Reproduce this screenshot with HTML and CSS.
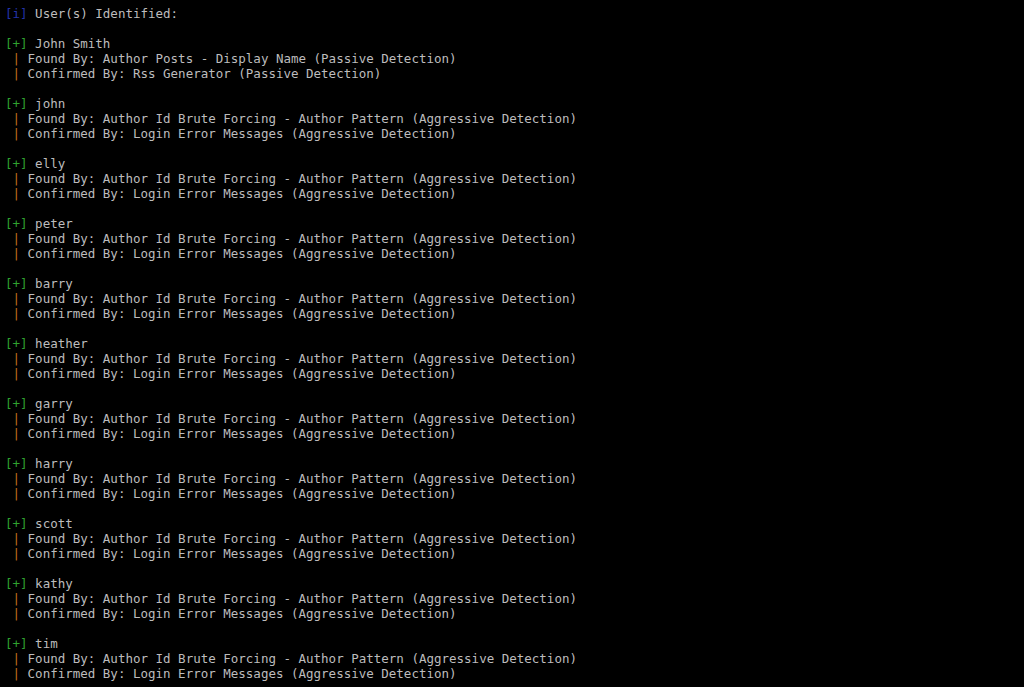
FILE: index.html
```html
<!DOCTYPE html>
<html lang="en">
<head>
    <meta charset="UTF-8">
    <title>wpscan - users</title>
    <link rel="stylesheet" href="styles.css">
</head>
<body>
    <div class="terminal">
        <div class="line"><span class="info">[i]</span> User(s) Identified:</div>
        <div class="line"> </div>

        <div class="line"><span class="ok">[+]</span> John Smith</div>
        <div class="line"> <span class="bar">|</span> Found By: Author Posts - Display Name (Passive Detection)</div>
        <div class="line"> <span class="bar">|</span> Confirmed By: Rss Generator (Passive Detection)</div>
        <div class="line"> </div>

        <div class="line"><span class="ok">[+]</span> john</div>
        <div class="line"> <span class="bar">|</span> Found By: Author Id Brute Forcing - Author Pattern (Aggressive Detection)</div>
        <div class="line"> <span class="bar">|</span> Confirmed By: Login Error Messages (Aggressive Detection)</div>
        <div class="line"> </div>

        <div class="line"><span class="ok">[+]</span> elly</div>
        <div class="line"> <span class="bar">|</span> Found By: Author Id Brute Forcing - Author Pattern (Aggressive Detection)</div>
        <div class="line"> <span class="bar">|</span> Confirmed By: Login Error Messages (Aggressive Detection)</div>
        <div class="line"> </div>

        <div class="line"><span class="ok">[+]</span> peter</div>
        <div class="line"> <span class="bar">|</span> Found By: Author Id Brute Forcing - Author Pattern (Aggressive Detection)</div>
        <div class="line"> <span class="bar">|</span> Confirmed By: Login Error Messages (Aggressive Detection)</div>
        <div class="line"> </div>

        <div class="line"><span class="ok">[+]</span> barry</div>
        <div class="line"> <span class="bar">|</span> Found By: Author Id Brute Forcing - Author Pattern (Aggressive Detection)</div>
        <div class="line"> <span class="bar">|</span> Confirmed By: Login Error Messages (Aggressive Detection)</div>
        <div class="line"> </div>

        <div class="line"><span class="ok">[+]</span> heather</div>
        <div class="line"> <span class="bar">|</span> Found By: Author Id Brute Forcing - Author Pattern (Aggressive Detection)</div>
        <div class="line"> <span class="bar">|</span> Confirmed By: Login Error Messages (Aggressive Detection)</div>
        <div class="line"> </div>

        <div class="line"><span class="ok">[+]</span> garry</div>
        <div class="line"> <span class="bar">|</span> Found By: Author Id Brute Forcing - Author Pattern (Aggressive Detection)</div>
        <div class="line"> <span class="bar">|</span> Confirmed By: Login Error Messages (Aggressive Detection)</div>
        <div class="line"> </div>

        <div class="line"><span class="ok">[+]</span> harry</div>
        <div class="line"> <span class="bar">|</span> Found By: Author Id Brute Forcing - Author Pattern (Aggressive Detection)</div>
        <div class="line"> <span class="bar">|</span> Confirmed By: Login Error Messages (Aggressive Detection)</div>
        <div class="line"> </div>

        <div class="line"><span class="ok">[+]</span> scott</div>
        <div class="line"> <span class="bar">|</span> Found By: Author Id Brute Forcing - Author Pattern (Aggressive Detection)</div>
        <div class="line"> <span class="bar">|</span> Confirmed By: Login Error Messages (Aggressive Detection)</div>
        <div class="line"> </div>

        <div class="line"><span class="ok">[+]</span> kathy</div>
        <div class="line"> <span class="bar">|</span> Found By: Author Id Brute Forcing - Author Pattern (Aggressive Detection)</div>
        <div class="line"> <span class="bar">|</span> Confirmed By: Login Error Messages (Aggressive Detection)</div>
        <div class="line"> </div>

        <div class="line"><span class="ok">[+]</span> tim</div>
        <div class="line"> <span class="bar">|</span> Found By: Author Id Brute Forcing - Author Pattern (Aggressive Detection)</div>
        <div class="line"> <span class="bar">|</span> Confirmed By: Login Error Messages (Aggressive Detection)</div>
    </div>
</body>
</html>
```

FILE: styles.css
```css
html, body {
    margin: 0;
    padding: 0;
    background-color: #000;
    height: 100%;
    overflow: hidden;
}

.terminal {
    padding: 6px 0 0 5px;
    font-family: "DejaVu Sans Mono", "Liberation Mono", monospace;
    font-size: 12.5px;
    line-height: 15px;
    color: #bdbcbd;
}

.line {
    white-space: pre;
    height: 15px;
}

.info {
    color: #2233a8;
}

.ok {
    color: #2fa12f;
}

.bar {
    color: #c4701e;
}
```
